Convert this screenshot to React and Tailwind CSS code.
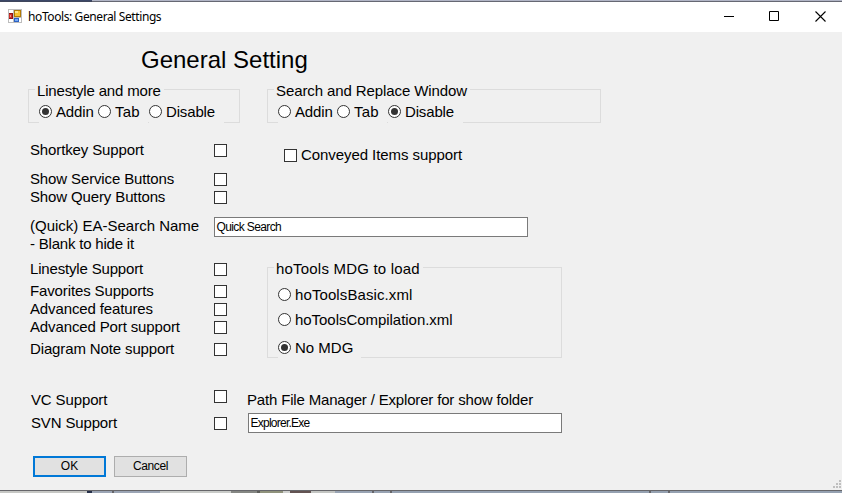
import React from "react";

const SANS = "font-['Liberation_Sans',Arial,sans-serif]";

function Label({ children, className = "tracking-[-0.13px]" }) {
  return (
    <span className={`block h-[18px] whitespace-nowrap text-[15px] leading-[18px] ${className}`}>
      {children}
    </span>
  );
}

function Check() {
  return <span className="block size-[13px] shrink-0 border border-[#333333] bg-white" />;
}

function Radio({ label, on, className = "h-[18px]", tracking = "tracking-[-0.15px]" }) {
  return (
    <div className={`flex items-start ${className}`}>
      <svg viewBox="0 0 13 13" className="mt-[2px] size-[13px] shrink-0">
        <circle cx="6.5" cy="6.5" r="6" fill="#fff" stroke="#333" />
        {on && <circle cx="6.5" cy="6.5" r="3.5" fill="#333" />}
      </svg>
      <Label className={`ml-1 ${tracking}`}>{label}</Label>
    </div>
  );
}

function Row({ label, className = "", tracking }) {
  return (
    <div className={`flex h-[18px] w-[197px] items-center justify-between ${className}`}>
      <Label className={tracking}>{label}</Label>
      <Check />
    </div>
  );
}

function Group({ title, className = "", tracking = "", children }) {
  return (
    <section className={`border border-[#dcdcdc] ${className}`}>
      <div className="-mt-[8px] ml-[6px] flex">
        <Label className={`bg-[#f0f0f0] pl-[2px] pr-[3px] ${tracking}`}>{title}</Label>
      </div>
      {children}
    </section>
  );
}

function ModeRadios({ selected }) {
  return (
    <div className="-mb-px ml-[10px] mt-[3px] flex h-[21px]">
      <div className="flex h-[21px] w-[109px] bg-[#f0f0f0]">
        <Radio label="Addin" on={selected === "Addin"} className="h-[18px] w-[59px]" />
        <Radio label="Tab" on={selected === "Tab"} tracking="tracking-[0.2px]" />
      </div>
      <div className="ml-px h-[21px] w-[75px] bg-[#f0f0f0]">
        <Radio label="Disable" on={selected === "Disable"} />
      </div>
    </div>
  );
}

function TextBox({ value, className = "" }) {
  return (
    <div className={`h-[20px] w-[314px] border border-[#7a7a7a] bg-white pl-[1.500px] text-[12px] leading-[18px] ${className}`}>
      {value}
    </div>
  );
}

const desktop = [
  ["w-[87px]", "bg-[#c6c7c4]"],
  ["w-[5px]", "bg-[#26304a]"],
  ["w-[20px]", "bg-[#9ba5b5]"],
  ["w-[2px]", "bg-[#66666a]"],
  ["w-[46px]", "bg-[#9ba5b5]"],
  ["w-[71px]", "bg-[#c9cbc8]"],
  ["w-[26px]", "bg-[#858783]"],
  ["w-[3px]", "bg-[#5d5e5a]"],
  ["w-[23px]", "bg-[#90937c]"],
  ["w-[7px]", "bg-[#cfd0ce]"],
  ["w-[21px]", "bg-[#635352]"],
  ["w-[24px]", "bg-[#c3c5c2]"],
  ["w-[37px]", "bg-[#98a3b3]"],
  ["w-[2px]", "bg-[#66666a]"],
  ["w-[16px]", "bg-[#98a3b3]"],
  ["w-[2px]", "bg-[#66666a]"],
  ["w-[257px]", "bg-[#95a1b1]"],
  ["w-[2px]", "bg-[#66666a]"],
  ["w-[17px]", "bg-[#95a1b1]"],
  ["w-[2px]", "bg-[#66666a]"],
  ["flex-1", "bg-[#95a1b1]"],
];

function AppIcon() {
  return (
    <svg viewBox="0 0 14 14" className="mb-[2px] ml-[8px] size-[14px]" shapeRendering="crispEdges">
      <rect width="14" height="14" fill="#bdbdbd" />
      <rect x="1" y="1" width="4" height="3" fill="#fff" />
      <rect x="1" y="10" width="4" height="3" fill="#fff" />
      <rect x="11" y="9" width="2" height="4" fill="#fff" />
      <rect x="1" y="4" width="4" height="6" fill="#8f1414" />
      <rect x="1" y="5" width="3" height="4" fill="#d0302a" />
      <rect x="2" y="6" width="1" height="2" fill="#f0948a" />
      <rect x="6" y="1" width="7" height="7" fill="#b07b08" />
      <rect x="7" y="2" width="5" height="5" fill="#f7c331" />
      <rect x="7" y="2" width="3" height="2" fill="#ffe48a" />
      <rect x="6" y="9" width="5" height="4" fill="#2d62c4" />
      <rect x="7" y="10" width="3" height="2" fill="#74a9f5" />
    </svg>
  );
}

export default function App() {
  return (
    <div className={`flex h-[493px] w-[842px] flex-col overflow-hidden bg-[#f0f0f0] text-black ${SANS}`}>
      <div className="flex h-px shrink-0">
        <div className="w-[92px] bg-[#3b4767]" />
        <div className="flex-1 bg-[#b1b5c6]" />
      </div>
      <div className="flex h-px shrink-0">
        <div className="w-[92px] bg-[#3f465c]" />
        <div className="flex-1 bg-[#666873]" />
      </div>

      <header className="flex h-[30px] shrink-0 items-center bg-white">
        <AppIcon />
        <span className="ml-[6px] whitespace-nowrap font-['Noto_Sans',sans-serif] text-[12px] leading-[16px] tracking-[-0.4px]">
          hoTools: General Settings
        </span>
        <svg viewBox="0 0 102 11" className="mb-px ml-auto mr-[16px] h-[11px] w-[102px]" fill="none" stroke="#000">
          <path d="M0 5.5h10" />
          <path d="M45.5.5h9v9h-9z" />
          <path d="M91.500.5l10 10M101.500.5l-10 10" strokeWidth="1.100" />
        </svg>
      </header>

      <main className="flex h-[458px] shrink-0 flex-col">
        <h1 className="ml-[141px] mt-[14px] h-[28px] whitespace-nowrap text-[24px] leading-[28px]">General Setting</h1>

        <div className="ml-[28px] mt-[15px] flex gap-[27px]">
          <Group title="Linestyle and more" tracking="tracking-[-0.17px]" className="h-[34px] w-[212px]">
            <ModeRadios selected="Addin" />
          </Group>
          <Group title="Search and Replace Window" tracking="tracking-[-0.1px]" className="h-[34px] w-[334px]">
            <ModeRadios selected="Disable" />
          </Group>
        </div>

        <div className="ml-[30px] mt-[18px] flex h-[76px]">
          <div>
            <Row label="Shortkey Support" />
            <Row label="Show Service Buttons" className="mt-[11px]" />
            <Row label="Show Query Buttons" />
          </div>
          <div className="ml-[57px] mt-[5px] flex h-[18px] items-center">
            <Check />
            <Label className="ml-1 tracking-[-0.07px]">Conveyed Items support</Label>
          </div>
        </div>

        <div className="ml-[30px] flex h-[43px]">
          <div className="w-[184px]">
            <Label className="tracking-normal">(Quick) EA-Search Name</Label>
            <Label className="tracking-[-0.2px]">- Blank to hide it</Label>
          </div>
          <TextBox value="Quick Search" className="tracking-[-0.62px]" />
        </div>

        <div className="ml-[30px] flex h-[130px]">
          <div className="w-[237px]">
            <Row label="Linestyle Support" tracking="tracking-[-0.17px]" />
            <Row label="Favorites Supports" className="mt-[4px]" />
            <Row label="Advanced features" />
            <Row label="Advanced Port support" />
            <Row label="Diagram Note support" className="mt-[4px]" />
          </div>
          <Group title="hoTools MDG to load" tracking="tracking-[0.2px]" className="mt-[7px] h-[91px] w-[295px]">
            <div className="ml-[10px] mt-[8px] w-[83px]">
              <Radio label="hoToolsBasic.xml" tracking="tracking-[0.1px]" />
              <Radio label="hoToolsCompilation.xml" className="mt-[7px] h-[18px]" tracking="tracking-[-0.04px]" />
              <Radio label="No MDG" on className="mt-[10px] h-[20px] bg-[#f0f0f0]" tracking="tracking-normal" />
            </div>
          </Group>
        </div>

        <div className="ml-[31px] flex h-[66px]">
          <div className="w-[183px] pt-px">
            <Label>VC Support</Label>
            <Label className="mt-[5px] tracking-[-0.15px]">SVN Support</Label>
          </div>
          <div className="flex w-[33px] flex-col gap-[14px]">
            <Check />
            <Check />
          </div>
          <div className="pt-px">
            <Label className="tracking-[-0.17px]">Path File Manager / Explorer for show folder</Label>
            <TextBox value="Explorer.Exe" className="ml-px mt-[4px] tracking-[-0.75px]" />
          </div>
        </div>

        <div className="ml-[33px] flex gap-[8px] text-center text-[12px]">
          <button className="h-[21px] w-[73px] border-2 border-[#0078d7] bg-[#e1e1e1] leading-[17px]">OK</button>
          <button className="h-[21px] w-[73px] border border-[#adadad] bg-[#e1e1e1] leading-[19px] tracking-[-0.4px]">
            Cancel
          </button>
        </div>

        <svg viewBox="0 0 8 8" className="ml-auto mr-px mt-[3px] size-[8px] shrink-0" fill="#bfbfbf" shapeRendering="crispEdges">
          <path d="M6 0h2v2H6zM3 3h2v2H3zM6 3h2v2H6zM0 6h2v2H0zM3 6h2v2H3zM6 6h2v2H6z" />
        </svg>
      </main>

      <div className="h-px shrink-0 bg-[#66666a]" />
      <div className="flex h-[2px] shrink-0">
        {desktop.map(([w, c], i) => (
          <div key={i} className={`${w} ${c}`} />
        ))}
      </div>
    </div>
  );
}
